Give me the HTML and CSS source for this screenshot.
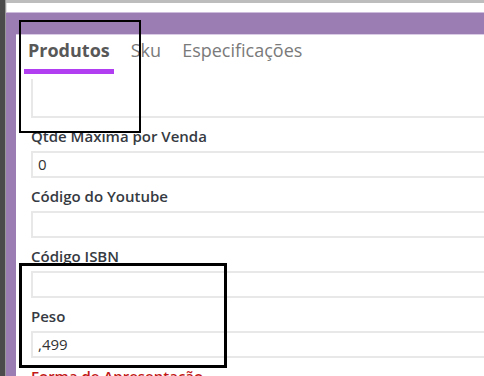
FILE: index.html
```html
<!DOCTYPE html>
<html lang="pt">
<head>
<meta charset="utf-8">
<link rel="stylesheet" href="styles.css">
</head>
<body>
<div class="frame">
  <div class="edge"></div>
  <div class="window">
    <div class="topbar"></div>
    <div class="whitestrip"></div>
    <div class="main">
      <div class="panel">
        <div class="tabs">
          <div class="tab active">Produtos</div>
          <div class="tab">Sku</div>
          <div class="tab">Especificações</div>
        </div>
        <div class="form">
          <div class="input partial"></div>
          <div class="field">
            <div class="label">Qtde Máxima por Venda</div>
            <div class="input">0</div>
          </div>
          <div class="field">
            <div class="label">Código do Youtube</div>
            <div class="input"></div>
          </div>
          <div class="field">
            <div class="label">Código ISBN</div>
            <div class="input"></div>
          </div>
          <div class="field">
            <div class="label">Peso</div>
            <div class="input">,499</div>
          </div>
          <div class="field">
            <div class="label required">Forma de Apresentação</div>
          </div>
        </div>
      </div>
    </div>
  </div>
</div>
<div class="mark mark-tabs"></div>
<div class="mark mark-peso"></div>
</body>
</html>
```
FILE: styles.css
```css
html, body {
  margin: 0;
  padding: 0;
  width: 484px;
  height: 376px;
  overflow: hidden;
  background: #ffffff;
  font-family: "Open Sans", "Noto Sans", sans-serif;
}

.frame {
  display: flex;
  height: 376px;
}

.edge {
  width: 5px;
  background: #4b4b4b;
  border-right: 1px solid #9a9a9a;
  flex: none;
}

.window {
  flex: 1;
  display: flex;
  flex-direction: column;
  min-width: 0;
}

.topbar {
  height: 3px;
  background: #bdbdbd;
}

.whitestrip {
  height: 9px;
  background: #ffffff;
  border-left: 1px solid #e2e2e2;
}

.main {
  flex: 1;
  background: #9b7db4;
  border-top: 1px solid #cdbcdc;
  padding: 21px 0 0 10px;
  display: flex;
  flex-direction: column;
  min-height: 0;
}

.panel {
  flex: 1;
  background: #ffffff;
  border-top: 1px solid #d9cce4;
  overflow: hidden;
}

.tabs {
  display: flex;
  padding: 3px 0 0 8px;
}

.tab {
  font-size: 18px;
  line-height: 24px;
  color: #7a7a7a;
  padding: 0 4px 12px 4px;
  margin-right: 13px;
}

.tab.active {
  font-weight: 700;
  color: #585858;
  padding-bottom: 7px;
  border-bottom: 5px solid #b23ef2;
}

.form {
  padding-left: 15px;
  display: flex;
  flex-direction: column;
}

.input {
  width: 480px;
  height: 27px;
  box-sizing: border-box;
  border: 2px solid #e8e8e8;
  font-size: 15px;
  line-height: 23px;
  color: #333333;
  padding-left: 5px;
}

.input.partial {
  margin-top: 5px;
  height: 39px;
  border-top: none;
}

.field {
  display: flex;
  flex-direction: column;
  gap: 6px;
  margin-top: 9px;
}

.label {
  font-size: 15px;
  line-height: 18px;
  font-weight: 600;
  color: #363a42;
}

.label.required {
  color: #c21818;
}

.mark {
  position: absolute;
  box-sizing: border-box;
  border: 2px solid #000000;
}

.mark-tabs {
  left: 19px;
  top: 20px;
  width: 122px;
  height: 113px;
}

.mark-peso {
  left: 19px;
  top: 263px;
  width: 208px;
  height: 105px;
  border-width: 3px;
}
```
